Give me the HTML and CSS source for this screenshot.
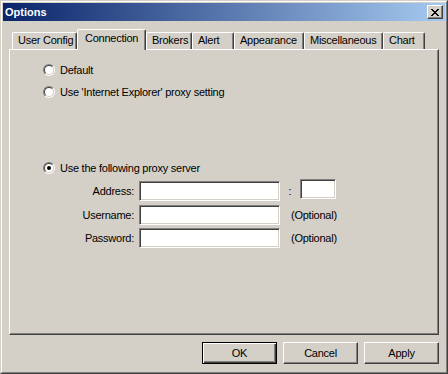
FILE: index.html
```html
<!DOCTYPE html>
<html>
<head>
<meta charset="utf-8">
<title>Options</title>
<link rel="stylesheet" href="styles.css">
</head>
<body>
<div class="window">
  <div class="frame">
    <div class="titlebar">
      <span class="title">Options</span>
      <span class="close">
        <svg width="8" height="7" viewBox="0 0 8 7" shape-rendering="crispEdges">
          <path fill="#000" d="M0 0h2v1H0zM6 0h2v1H6zM1 1h2v1H1zM5 1h2v1H5zM2 2h4v1H2zM3 3h2v1H3zM2 4h4v1H2zM1 5h2v1H1zM5 5h2v1H5zM0 6h2v1H0zM6 6h2v1H6z"/>
        </svg>
      </span>
    </div>
    <div class="content">
      <div class="tabs">
        <div class="tab t-user">User Config</div>
        <div class="tab active t-conn">Connection</div>
        <div class="tab t-brokers">Brokers</div>
        <div class="tab t-alert">Alert</div>
        <div class="tab t-appear">Appearance</div>
        <div class="tab t-misc">Miscellaneous</div>
        <div class="tab t-chart">Chart</div>
      </div>
      <div class="panel">
        <div class="radio-row row-default"><span class="radio"></span><span>Default</span></div>
        <div class="radio-row row-ie"><span class="radio"></span><span>Use 'Internet Explorer' proxy setting</span></div>
        <div class="radio-row row-proxy"><span class="radio checked"></span><span>Use the following proxy server</span></div>
        <div class="field-row row-address">
          <span class="label">Address:</span>
          <span class="input"></span>
          <span class="colon">:</span>
          <span class="input port"></span>
        </div>
        <div class="field-row row-user">
          <span class="label">Username:</span>
          <span class="input"></span>
          <span class="note">(Optional)</span>
        </div>
        <div class="field-row row-pass">
          <span class="label">Password:</span>
          <span class="input"></span>
          <span class="note">(Optional)</span>
        </div>
      </div>
      <div class="buttons">
        <span class="btn default">OK</span>
        <span class="btn">Cancel</span>
        <span class="btn">Apply</span>
      </div>
    </div>
  </div>
</div>
</body>
</html>
```
FILE: styles.css
```css
html, body {
  margin: 0;
  padding: 0;
  background: #d4d0c8;
}
body {
  font-family: "Liberation Sans", Arial, sans-serif;
  font-size: 11px;
  letter-spacing: -0.25px;
  color: #000;
}
.window {
  width: 448px;
  height: 374px;
  box-sizing: border-box;
  border: 1px solid;
  border-color: #d4d0c8 #404040 #404040 #d4d0c8;
  background: #d4d0c8;
}
.frame {
  height: 100%;
  box-sizing: border-box;
  border: 1px solid;
  border-color: #ffffff #808080 #808080 #ffffff;
  padding: 1px;
  display: flex;
  flex-direction: column;
}
.titlebar {
  height: 18px;
  flex: none;
  display: flex;
  align-items: center;
  justify-content: space-between;
  padding: 0 2px 0 2px;
  background: linear-gradient(to right, #0a246a, #a6caf0);
}
.title {
  color: #fff;
  font-weight: bold;
  font-size: 11px;
  letter-spacing: 0;
  line-height: 18px;
}
.close {
  width: 16px;
  height: 14px;
  box-sizing: border-box;
  background: #d4d0c8;
  border: 1px solid;
  border-color: #ffffff #404040 #404040 #ffffff;
  box-shadow: inset -1px -1px #808080;
  display: flex;
  align-items: center;
  justify-content: center;
  padding: 1px 1px 1px 0;
}
.close svg {
  display: block;
}
.content {
  flex: 1;
  padding: 8px 6px 0 6px;
}
.tabs {
  display: flex;
  align-items: flex-end;
  height: 20px;
  padding-left: 3px;
}
.tab {
  height: 17px;
  box-sizing: border-box;
  border-top: 1px solid #fff;
  border-left: 1px solid #fff;
  border-right: 1px solid #404040;
  box-shadow: inset -1px 0 #808080;
  border-radius: 2px 2px 0 0;
  padding-left: 5px;
  line-height: 15px;
  white-space: nowrap;
  overflow: hidden;
  background: #d4d0c8;
}
.tab.active {
  height: 21px;
  margin-bottom: -1px;
  padding-left: 7px;
  line-height: 16px;
  position: relative;
  z-index: 1;
}
.t-user { width: 65px; }
.t-conn { width: 69px; }
.t-brokers { width: 46px; }
.t-alert { width: 42px; }
.t-appear { width: 70px; }
.t-misc { width: 79px; }
.t-chart { width: 42px; }
.panel {
  width: 430px;
  height: 286px;
  box-sizing: border-box;
  border: 1px solid;
  border-color: #ffffff #404040 #404040 #ffffff;
  box-shadow: inset -1px -1px #808080;
  padding: 12px 0 0 33px;
  display: flex;
  flex-direction: column;
}
.radio-row {
  height: 16px;
  display: flex;
  align-items: center;
}
.row-ie { margin-top: 6px; }
.row-proxy { margin-top: 60px; }
.radio {
  width: 12px;
  height: 12px;
  box-sizing: border-box;
  border-radius: 50%;
  border: 1px solid;
  border-color: #808080 #ffffff #ffffff #808080;
  margin-right: 5px;
  position: relative;
  flex: none;
}
.radio::before {
  content: "";
  position: absolute;
  inset: 0;
  border-radius: 50%;
  border: 1px solid;
  border-color: #404040 #d4d0c8 #d4d0c8 #404040;
  background: #fff;
}
.radio.checked::after {
  content: "";
  position: absolute;
  left: 3px;
  top: 3px;
  width: 4px;
  height: 4px;
  border-radius: 50%;
  background: #000;
}
.field-row {
  height: 20px;
  display: flex;
  align-items: center;
}
.row-address { margin-top: 5px; }
.row-user { margin-top: 4px; }
.row-pass { margin-top: 3px; }
.label {
  width: 91px;
  text-align: right;
  margin-right: 5px;
}
.input {
  width: 141px;
  height: 20px;
  box-sizing: border-box;
  background: #fff;
  border: 1px solid;
  border-color: #808080 #ffffff #ffffff #808080;
  box-shadow: inset 1px 1px #404040, inset -1px -1px #d4d0c8;
  flex: none;
}
.colon {
  width: 20px;
  text-align: center;
}
.input.port {
  width: 36px;
  margin-top: -4px;
}
.note {
  margin-left: 11px;
}
.buttons {
  display: flex;
  justify-content: flex-end;
  gap: 6px;
  margin-top: 7px;
}
.btn {
  width: 75px;
  height: 22px;
  box-sizing: border-box;
  border: 1px solid;
  border-color: #ffffff #404040 #404040 #ffffff;
  box-shadow: inset -1px -1px #808080;
  display: flex;
  align-items: center;
  justify-content: center;
}
.btn.default {
  border-color: #000;
  box-shadow: inset 1px 1px #ffffff, inset -1px -1px #404040, inset -2px -2px #808080;
}
```
